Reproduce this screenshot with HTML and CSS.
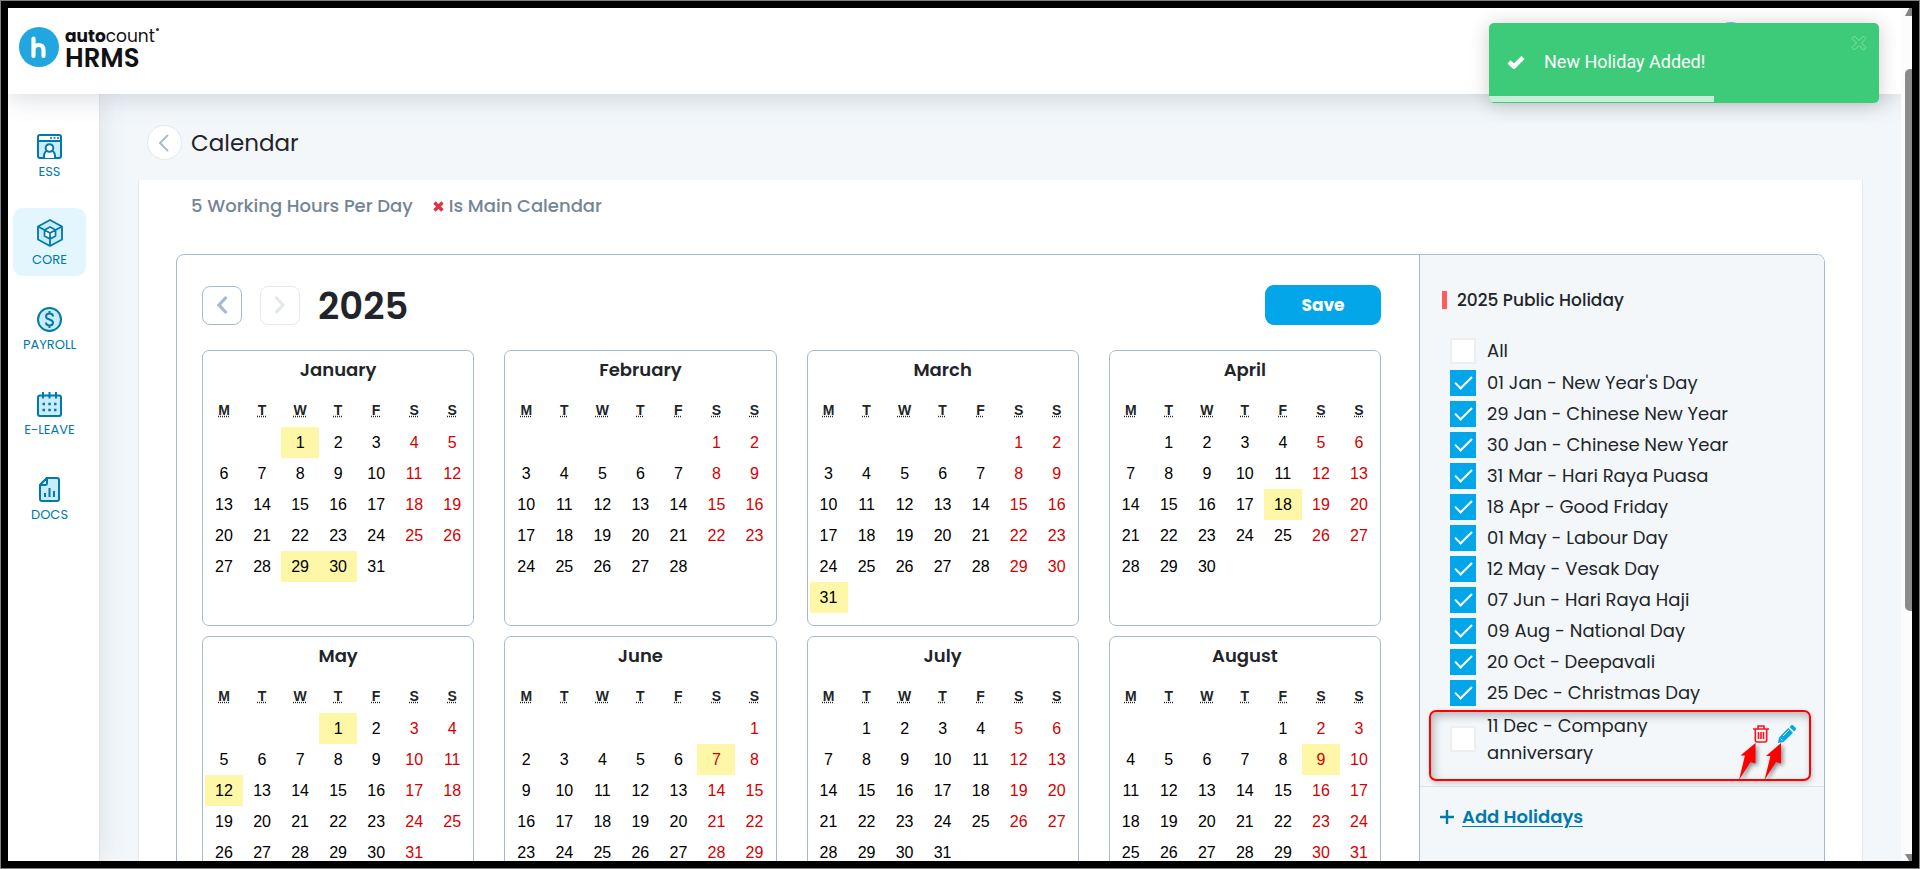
FILE: index.html
```html
<!DOCTYPE html>
<html lang="en">
<head>
<meta charset="utf-8">
<meta name="viewport" content="width=device-width, initial-scale=1">
<title>Calendar - HRMS</title>
<link rel="stylesheet" href="styles.css">
</head>
<body>
<div class="frame">
  <div class="app">
    <header class="topbar">
      <a class="logo" href="#" aria-label="autocount HRMS">
        <svg class="logo-mark" viewBox="0 0 40 40" aria-hidden="true">
          <circle cx="20" cy="20" r="20" fill="#22a6df"/>
          <path d="M14.500 11.500v17.500M14.500 23c0-3.500 2-5 5-5s5 1.500 5 5v6" fill="none" stroke="#fff" stroke-width="4.200" stroke-linecap="round"/>
        </svg>
        <span class="logo-text">
          <span class="logo-top"><b>auto</b>count<span class="logo-dot"></span></span>
          <span class="logo-bottom">HRMS</span>
        </span>
      </a>
      <span class="avatar"></span>
    </header>

    <div class="body">
      <nav class="sidebar">
        <a class="nav-item" href="#">
          <svg width="25" height="25" viewBox="0 0 25 25" aria-hidden="true"><rect x="1" y="1" width="23" height="23" rx="2" fill="#fff"/><path d="M1 7h23v17H1z" fill="#c9ecfa"/><g fill="none" stroke="#0079ab" stroke-width="2"><rect x="1" y="1" width="23" height="23" rx="2"/><path d="M1 7h23"/><path d="M7 24v-2.500a5.500 5.500 0 0 1 11 0V24" fill="#fff"/><circle cx="12.500" cy="14" r="3.800" fill="#fff"/></g><path d="M13 4h2M16.500 4h2M20 4h2" stroke="#0079ab" stroke-width="1.600"/></svg>
          <span>ESS</span>
        </a>
        <a class="nav-item active" href="#">
          <svg width="26" height="28" viewBox="0 0 26 28" aria-hidden="true"><path d="M13 1l12 6.500v13L13 27 1 20.500v-13z" fill="#c9ecfa"/><path d="M13 8.500l5 3v6l-5 2.500-5-2.500v-6z" fill="#fff"/><g fill="none" stroke="#0079ab" stroke-width="1.800" stroke-linejoin="round"><path d="M13 1l12 6.500v13L13 27 1 20.500v-13z"/><path d="M13 8l5.500 3v6L13 20l-5.500-3v-6zM7.500 11l5.500 3 5.500-3M13 14v13M1 7.500L7.500 11M25 7.500L18.500 11"/></g></svg>
          <span>CORE</span>
        </a>
        <a class="nav-item" href="#">
          <svg width="25" height="25" viewBox="0 0 25 25" aria-hidden="true"><circle cx="12.500" cy="12.500" r="11.500" fill="#c9ecfa" stroke="#0079ab" stroke-width="2"/><path d="M16 9.500c0-2-1.500-3-3.500-3S9 7.500 9 9.400c0 4 7 2.200 7 6.200 0 2-1.500 3-3.500 3S9 17.500 9 15.500M12.500 4v2.500M12.500 18.500V21" fill="none" stroke="#0079ab" stroke-width="2"/></svg>
          <span>PAYROLL</span>
        </a>
        <a class="nav-item" href="#">
          <svg width="25" height="25" viewBox="0 0 25 25" aria-hidden="true"><rect x="1" y="3.500" width="23" height="20.500" rx="2" fill="#c9ecfa" stroke="#0079ab" stroke-width="2"/><path d="M6 0v6.500M12.500 0v6.500M19 0v6.500" stroke="#0079ab" stroke-width="2"/><path d="M5.500 12H8M11.300 12h2.500M17 12h2.500M5.500 18H8M11.300 18h2.500M17 18h2.500" stroke="#0079ab" stroke-width="2.600"/></svg>
          <span>E-LEAVE</span>
        </a>
        <a class="nav-item" href="#">
          <svg width="25" height="25" viewBox="0 0 25 25" aria-hidden="true"><path d="M10 1h10a2 2 0 0 1 2 2v19a2 2 0 0 1-2 2H5a2 2 0 0 1-2-2V8z" fill="#c9ecfa" stroke="#0079ab" stroke-width="2" stroke-linejoin="round"/><path d="M10 1v5a2 2 0 0 1-2 2H3z" fill="#fff" stroke="#0079ab" stroke-width="2" stroke-linejoin="round"/><path d="M8 20v-4M12.500 20v-9M17 20v-6" stroke="#0079ab" stroke-width="2"/></svg>
          <span>DOCS</span>
        </a>
      </nav>

      <main class="main">
        <div class="page-head">
          <button class="back" type="button" aria-label="Back"><svg width="11" height="18" viewBox="0 0 11 18"><path d="M9.500 1.500L2 9l7.500 7.500" fill="none" stroke="#a9bbcf" stroke-width="2" stroke-linecap="round"/></svg></button>
          <h1>Calendar</h1>
        </div>

        <section class="card">
          <div class="info">
            <span>5 Working Hours Per Day</span>
            <span class="main-flag"><svg width="11" height="11" viewBox="0 0 11 11" aria-hidden="true"><path d="M1.500 1.500l8 8M9.500 1.500l-8 8" stroke="#dc3545" stroke-width="3.400"/></svg>Is Main Calendar</span>
          </div>

          <div class="planner">
            <div class="year">
              <div class="year-head">
                <button class="step" type="button" aria-label="Previous year"><svg width="12" height="18" viewBox="0 0 12 18"><path d="M9.500 2L3 9l6.500 7" fill="none" stroke="#a5b9cf" stroke-width="3.200" stroke-linecap="round"/></svg></button>
                <button class="step" type="button" aria-label="Next year" disabled><svg width="12" height="18" viewBox="0 0 12 18"><path d="M2.500 2L9 9l-6.500 7" fill="none" stroke="#e2e8ee" stroke-width="3.200" stroke-linecap="round"/></svg></button>
                <h2>2025</h2>
                <button class="save" type="button">Save</button>
              </div>
              <div class="months" id="months"></div>
            </div>

            <aside class="holidays">
              <h3>2025 Public Holiday</h3>
              <ul>
                <li class="all"><label><input type="checkbox"><span>All</span></label></li>
                <li><label><input type="checkbox" checked><span>01 Jan - New Year's Day</span></label></li>
                <li><label><input type="checkbox" checked><span>29 Jan - Chinese New Year</span></label></li>
                <li><label><input type="checkbox" checked><span>30 Jan - Chinese New Year</span></label></li>
                <li><label><input type="checkbox" checked><span>31 Mar - Hari Raya Puasa</span></label></li>
                <li><label><input type="checkbox" checked><span>18 Apr - Good Friday</span></label></li>
                <li><label><input type="checkbox" checked><span>01 May - Labour Day</span></label></li>
                <li><label><input type="checkbox" checked><span>12 May - Vesak Day</span></label></li>
                <li><label><input type="checkbox" checked><span>07 Jun - Hari Raya Haji</span></label></li>
                <li><label><input type="checkbox" checked><span>09 Aug - National Day</span></label></li>
                <li><label><input type="checkbox" checked><span>20 Oct - Deepavali</span></label></li>
                <li><label><input type="checkbox" checked><span>25 Dec - Christmas Day</span></label></li>
                <li class="custom">
                  <label><input type="checkbox"><span>11 Dec - Company anniversary</span></label>
                  <span class="actions">
                    <button type="button" aria-label="Delete"><svg width="16" height="18" viewBox="0 0 16 18"><path d="M0 4h16M5 3.500V1h6v2.500M2.300 4.500V15a2 2 0 0 0 2 2h7.400a2 2 0 0 0 2-2V4.500M5.500 7v7M8 7v7M10.500 7v7" fill="none" stroke="#f8151c" stroke-width="1.600"/></svg></button>
                    <button type="button" aria-label="Edit"><svg width="18" height="18" viewBox="0 0 18 18"><path d="M10.300 3l4.700 4.700L5.500 17 0 18l1-5.500zM11.500 1.900L13 .5a1.600 1.600 0 0 1 2.200 0L17.500 2.800a1.600 1.600 0 0 1 0 2.200l-1.400 1.500z" fill="#03a6e8"/><path d="M5 11l6-6M2.500 13.500l2 2" stroke="#f3f7fa" stroke-width="1"/></svg></button>
                  </span>
                  <svg class="callout-arrows" width="46" height="42" viewBox="0 0 46 42" aria-hidden="true"><path d="M18.500 2l-15 12.500h4.500L2 39l11.500-18 5 1.500zM44 2L29 15h4.500l-6 24L39 21l5 1.500z" fill="#f00"/></svg>
                </li>
              </ul>
              <div class="add">
                <svg width="14" height="14" viewBox="0 0 14 14" aria-hidden="true"><path d="M7 0v14M0 7h14" stroke="#0079ab" stroke-width="2.400"/></svg>
                <a href="#">Add Holidays</a>
              </div>
            </aside>
          </div>
        </section>
      </main>
    </div>
  </div>

  <div class="scrollbar" aria-hidden="true"><span class="scroll-up"></span><span class="thumb"></span><span class="scroll-down"></span></div>

  <div class="toast" role="status">
    <svg width="18" height="14" viewBox="0 0 18 14" aria-hidden="true"><path d="M2 7l5 4.500L16 2.500" fill="none" stroke="#fff" stroke-width="4.500"/></svg>
    <span>New Holiday Added!</span>
    <button type="button" aria-label="Close"><svg width="16" height="16" viewBox="0 0 16 16"><path d="M3.500 1L8 5.500 12.500 1 15 3.500 10.500 8l4.500 4.500-2.500 2.500L8 10.500 3.500 15 1 12.500 5.500 8 1 3.500z" fill="none" stroke="#82dca6" stroke-width="1"/></svg></button>
    <span class="progress"></span>
  </div>
</div>
<script src="calendar.js"></script>
</body>
</html>
```
FILE: styles.css
```css
* { box-sizing: border-box; }
body { margin: 0; font-family: Poppins, Inter, "Liberation Sans", sans-serif; font-size: 18px; color: #212529; background: #000; }
button { font: inherit; cursor: pointer; }
h1, h2, h3, ul { margin: 0; padding: 0; font-weight: 400; }

.frame { position: relative; display: flex; height: 100vh; overflow: hidden; border: 8px solid #000; outline: 1px solid #808080; outline-offset: -1px; background: #f3f7fa; }
.app { display: flex; flex: 1; flex-direction: column; min-width: 0; }

.topbar { position: relative; z-index: 1; display: flex; flex: none; justify-content: space-between; height: 86px; padding: 19px 11px; background: #fff; box-shadow: 0 4px 24px rgba(60, 80, 100, .2); }
.logo { display: flex; gap: 6px; width: max-content; color: #111; text-decoration: none; }
.logo-mark { width: 40px; height: 40px; }
.logo-text { display: flex; flex-direction: column; }
.logo-top { font-size: 17px; line-height: 18px; }
.logo-dot { display: inline-block; width: 3px; height: 3px; margin-left: 1px; border-radius: 50%; background: #333; vertical-align: 11px; }
.logo-bottom { font-size: 26px; line-height: 26px; font-weight: 600; }
.avatar { width: 34px; height: 34px; margin: -5px 142px 0 0; border-radius: 50%; background: #8fb8e8; }

.body { display: flex; flex: 1; min-height: 0; }
.sidebar { display: flex; flex: none; flex-direction: column; gap: 20px; width: 92px; padding: 29px 13px 0 5px; border-right: 1px solid #dfe4ea; background: #fff; box-shadow: 4px 0 24px rgba(60, 80, 100, .1); }
.nav-item { display: flex; flex-direction: column; align-items: center; gap: 4px; padding: 11px 0 7px; border-radius: 10px; font-size: 13px; line-height: 18px; color: #0079ab; text-decoration: none; }
.nav-item.active { background: #e3f6fd; }

.main { display: flex; flex: 1; flex-direction: column; min-width: 0; padding: 31px 38px 0 38px; }
.page-head { display: flex; align-items: center; gap: 9px; padding: 0 9px 20px; }
.back { display: grid; place-items: center; width: 35px; height: 35px; padding: 0 2px 0 0; border: 1px solid #e4e9ee; border-radius: 50%; background: #fff; }
.page-head h1 { font-size: 23px; line-height: 34px; }
.card { flex: 1; padding: 12px 37px 0; border: 1px solid #e3e8ed; border-top: 0; background: #fff; }
.info { display: flex; gap: 20px; padding: 0 15px 34px; line-height: 28px; font-weight: 500; color: #748596; }
.main-flag { display: flex; align-items: center; gap: 5px; }

.planner { display: grid; grid-template-columns: minmax(0, 1fr) 405px; overflow: hidden; border: 1px solid #a9bace; border-radius: 8px; }
.year { padding: 30px 38px 24px 25px; }
.year-head { display: flex; align-items: center; gap: 18px; margin-bottom: 25px; }
.step { display: grid; place-items: center; width: 40px; height: 39px; padding: 0; border: 1px solid #a9bace; border-radius: 8px; background: #fff; }
.step:disabled { border-color: #e6eaee; cursor: default; }
.year-head h2 { flex: 1; padding-top: 2px; font-size: 37px; line-height: 38px; font-weight: 600; }
.save { width: 116px; height: 40px; border: 0; border-radius: 9px; font-size: 17px; font-weight: 700; color: #fff; background: #03a6e8; }

.months { display: grid; grid-template-columns: repeat(4, minmax(0, 1fr)); gap: 10px 30px; }
.month { height: 276px; padding: 4px 2px; border: 1px solid #a9bace; border-radius: 7px; }
.month table { width: 100%; border-collapse: collapse; table-layout: fixed; font-family: "Liberation Sans", Arial, sans-serif; font-size: 16px; text-align: center; color: #000; }
.month caption { height: 37px; font: 600 18px/30px Poppins, Inter, sans-serif; color: #212529; }
.month th { height: 35px; padding: 0; font-size: 14px; color: #212529; }
.month abbr { text-decoration: underline dotted; }
.month td { height: 31px; padding: 0; }
.month .weekend { color: #d50000; }
.month .holiday { background: #fff7a8; }

.holidays { border-left: 1px solid #a9bace; background: #f3f7fa; }
.holidays h3 { display: flex; align-items: center; gap: 10px; padding: 30px 22px 0; font-size: 17px; line-height: 30px; font-weight: 500; }
.holidays h3::before { width: 5px; height: 18px; background: #ff5c5c; content: ""; }
.holidays ul { padding: 22px 13px 5px 9px; border-bottom: 1px solid #dde2e7; list-style: none; }
.holidays li { padding: 0 21px; line-height: 27px; }
.holidays li + li { margin-top: 4px; }
.holidays .all { padding-bottom: 1px; }
.holidays label { display: flex; align-items: center; gap: 11px; }
.holidays input { display: grid; flex: none; place-items: center; width: 26px; height: 26px; margin: 0; border: 2px solid #eee; background: #fff; appearance: none; }
.holidays input:checked { border-color: #03a6e8; background: #03a6e8; }
.holidays input:checked::after { width: 15px; height: 7px; margin-bottom: 4px; border: solid #fff; border-width: 0 0 2px 2px; transform: rotate(-45deg); content: ""; }
.holidays .custom { position: relative; display: flex; justify-content: space-between; padding: 0 13px 13px 19px; border: 2px solid #f00; border-radius: 7px; box-shadow: inset 3px 4px 8px rgba(0, 0, 0, .25), 1px 2px 5px rgba(0, 0, 0, .2); }
.custom label { width: 250px; }
.actions { display: flex; gap: 9px; align-items: flex-start; padding-top: 13px; }
.actions button { display: flex; padding: 0; border: 0; background: none; }
.callout-arrows { position: absolute; right: 26px; bottom: -4px; filter: drop-shadow(2px 2px 2px rgba(0, 0, 0, .45)); }
.add { display: flex; align-items: center; gap: 8px; padding: 16px 20px; line-height: 28px; }
.add a { font-size: 18px; font-weight: 600; color: #0079ab; text-underline-offset: 3px; }

.scrollbar { position: relative; z-index: 2; display: flex; flex: none; flex-direction: column; align-items: flex-end; justify-content: space-between; width: 11px; background: #fcfcfc; }
.scroll-up { width: 7px; height: 8px; background: #858585; clip-path: polygon(100% 0, 60% 0, 0 100%, 100% 100%); }
.thumb { width: 7px; height: 542px; margin: 0 0 191px; border-radius: 5px 0 0 5px; background: #8b8b8b; }
.scroll-down { width: 7px; height: 7px; background: #858585; clip-path: polygon(0 0, 100% 0, 100% 100%, 60% 100%); }

.toast { position: absolute; z-index: 3; top: 15px; right: 33px; display: flex; align-items: center; gap: 19px; width: 390px; height: 80px; padding: 0 12px 3px 18px; overflow: hidden; border-radius: 5px; font: 400 18px/24px Roboto, "Liberation Sans", sans-serif; color: #fff; background: #3dcb79; box-shadow: 0 2px 20px rgba(0, 0, 0, .2); }
.toast button { display: flex; align-self: flex-start; margin: 12px 0 0 auto; padding: 0; border: 0; background: none; }
.progress { position: absolute; bottom: 1px; left: 0; width: 225px; height: 6px; background: #c5efd7; }
```
FILE: calendar.js
```javascript
const YEAR = 2025;
const MONTHS = ["January", "February", "March", "April", "May", "June", "July", "August"];
const WEEKDAYS = ["Monday", "Tuesday", "Wednesday", "Thursday", "Friday", "Saturday", "Sunday"];
const HOLIDAYS = new Set(["0-1", "0-29", "0-30", "2-31", "3-18", "4-1", "4-12", "5-7", "7-9"]);

function monthTable(month) {
  const offset = (new Date(YEAR, month, 1).getDay() + 6) % 7;
  const days = new Date(YEAR, month + 1, 0).getDate();
  let rows = "";
  for (let start = 1 - offset; start <= days; start += 7) {
    rows += "<tr>";
    for (let column = 0; column < 7; column++) {
      const day = start + column;
      const classes = [];
      if (column > 4) classes.push("weekend");
      if (HOLIDAYS.has(month + "-" + day)) classes.push("holiday");
      rows += `<td class="${classes.join(" ")}">${day > 0 && day <= days ? day : ""}</td>`;
    }
    rows += "</tr>";
  }
  const head = WEEKDAYS.map(name => `<th scope="col"><abbr title="${name}">${name[0]}</abbr></th>`).join("");
  return `<div class="month"><table><caption>${MONTHS[month]}</caption><thead><tr>${head}</tr></thead><tbody>${rows}</tbody></table></div>`;
}

document.getElementById("months").innerHTML = MONTHS.map((name, index) => monthTable(index)).join("");
```
